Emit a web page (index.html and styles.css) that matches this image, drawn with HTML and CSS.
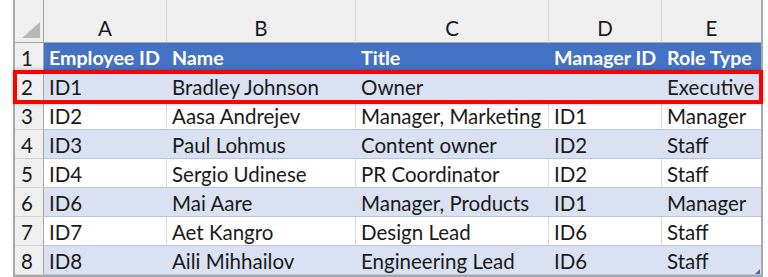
FILE: index.html
```html
<!DOCTYPE html>
<html>
<head>
<meta charset="utf-8">
<link rel="stylesheet" href="styles.css">
</head>
<body>
<div class="wrap">
  <table class="sheet">
    <colgroup>
      <col class="c-rh"><col class="c-a"><col class="c-b"><col class="c-c"><col class="c-d"><col class="c-e">
    </colgroup>
    <thead>
      <tr class="colhead">
        <th class="corner"><svg class="tri" width="18" height="16" viewBox="0 0 18 16"><polygon points="18,0 18,16 0,16" fill="#b8b8b8"/></svg></th>
        <th>A</th><th>B</th><th>C</th><th>D</th><th>E</th>
      </tr>
    </thead>
    <tbody>
      <tr class="hdr"><th class="rh">1</th><td>Employee ID</td><td>Name</td><td>Title</td><td>Manager ID</td><td>Role Type</td></tr>
      <tr class="band"><th class="rh">2</th><td>ID1</td><td>Bradley Johnson</td><td>Owner</td><td></td><td>Executive</td></tr>
      <tr class="plain"><th class="rh">3</th><td>ID2</td><td>Aasa Andrejev</td><td>Manager, Marketing</td><td>ID1</td><td>Manager</td></tr>
      <tr class="band"><th class="rh">4</th><td>ID3</td><td>Paul Lohmus</td><td>Content owner</td><td>ID2</td><td>Staff</td></tr>
      <tr class="plain"><th class="rh">5</th><td>ID4</td><td>Sergio Udinese</td><td>PR Coordinator</td><td>ID2</td><td>Staff</td></tr>
      <tr class="band"><th class="rh">6</th><td>ID6</td><td>Mai Aare</td><td>Manager, Products</td><td>ID1</td><td>Manager</td></tr>
      <tr class="plain"><th class="rh">7</th><td>ID7</td><td>Aet Kangro</td><td>Design Lead</td><td>ID6</td><td>Staff</td></tr>
      <tr class="band"><th class="rh">8</th><td>ID8</td><td>Aili Mihhailov</td><td>Engineering Lead</td><td>ID6</td><td>Staff</td></tr>
    </tbody>
  </table>
  <div class="highlight"></div>
  <span class="resize"></span>
</div>
</body>
</html>
```

FILE: styles.css
```css
html, body {
  margin: 0;
  padding: 0;
  background: #ffffff;
}

body {
  font-family: Lato, "Liberation Sans", sans-serif;
  color: #1a1a1a;
}

.wrap {
  position: relative;
  margin-left: 13px;
  width: 746px;
  border-left: 2px solid #a8a8a8;
  border-right: 2px solid #a8a8a8;
  border-bottom: 2px solid #a8a8a8;
}

.sheet {
  border-collapse: separate;
  border-spacing: 0;
  table-layout: fixed;
  width: 746px;
  font-size: 20.5px;
  line-height: 1;
}

.c-rh { width: 29px; }
.c-a { width: 123px; }
.c-b { width: 189px; }
.c-c { width: 193px; }
.c-d { width: 113px; }
.c-e { width: 99px; }

.sheet th,
.sheet td {
  padding: 0;
  white-space: nowrap;
  overflow: hidden;
  box-sizing: border-box;
}

.colhead th {
  height: 43px;
  background: #efefef;
  font-weight: normal;
  text-align: center;
  vertical-align: top;
  padding-top: 18px;
  border-right: 1px solid #d4d4d4;
  border-bottom: 1px solid #a6a6a6;
  color: #1a1a1a;
}

.colhead th:last-child {
  border-right: none;
}

.colhead th.corner {
  text-align: left;
  padding: 22px 0 4px 7px;
  border-right: 1px solid #a6a6a6;
}

.tri {
  display: block;
}

.sheet tbody tr {
  height: 29px;
}

.rh {
  background: #efefef;
  font-weight: normal;
  text-align: left;
  padding-left: 6px !important;
  padding-top: 2px !important;
  border-right: 1px solid #a6a6a6;
  border-bottom: 1px solid #d4d4d4;
  color: #1a1a1a;
}

.sheet td {
  padding-left: 5px;
  padding-top: 2px;
  border-bottom: 1px solid #b4c6e7;
}

.hdr td {
  background: #4472c4;
  color: #ffffff;
  font-weight: bold;
  font-size: 19.6px;
  border-bottom: 1px solid #4472c4;
}

.band td {
  background: #d9e1f2;
}

.plain td {
  background: #ffffff;
  border-right: 1px solid #d9d9d9;
}

.plain td:last-child {
  border-right: none;
}

.highlight {
  position: absolute;
  left: -2px;
  top: 70px;
  width: 750px;
  height: 34px;
  box-sizing: border-box;
  border: 4px solid #ff0000;
  box-shadow: 0 0 4px rgba(0, 0, 0, 0.25);
  pointer-events: none;
}

.resize {
  position: absolute;
  right: 1px;
  bottom: 1px;
  width: 5px;
  height: 5px;
  background: #3c6db8;
  clip-path: polygon(100% 0, 100% 100%, 0 100%);
}
```
